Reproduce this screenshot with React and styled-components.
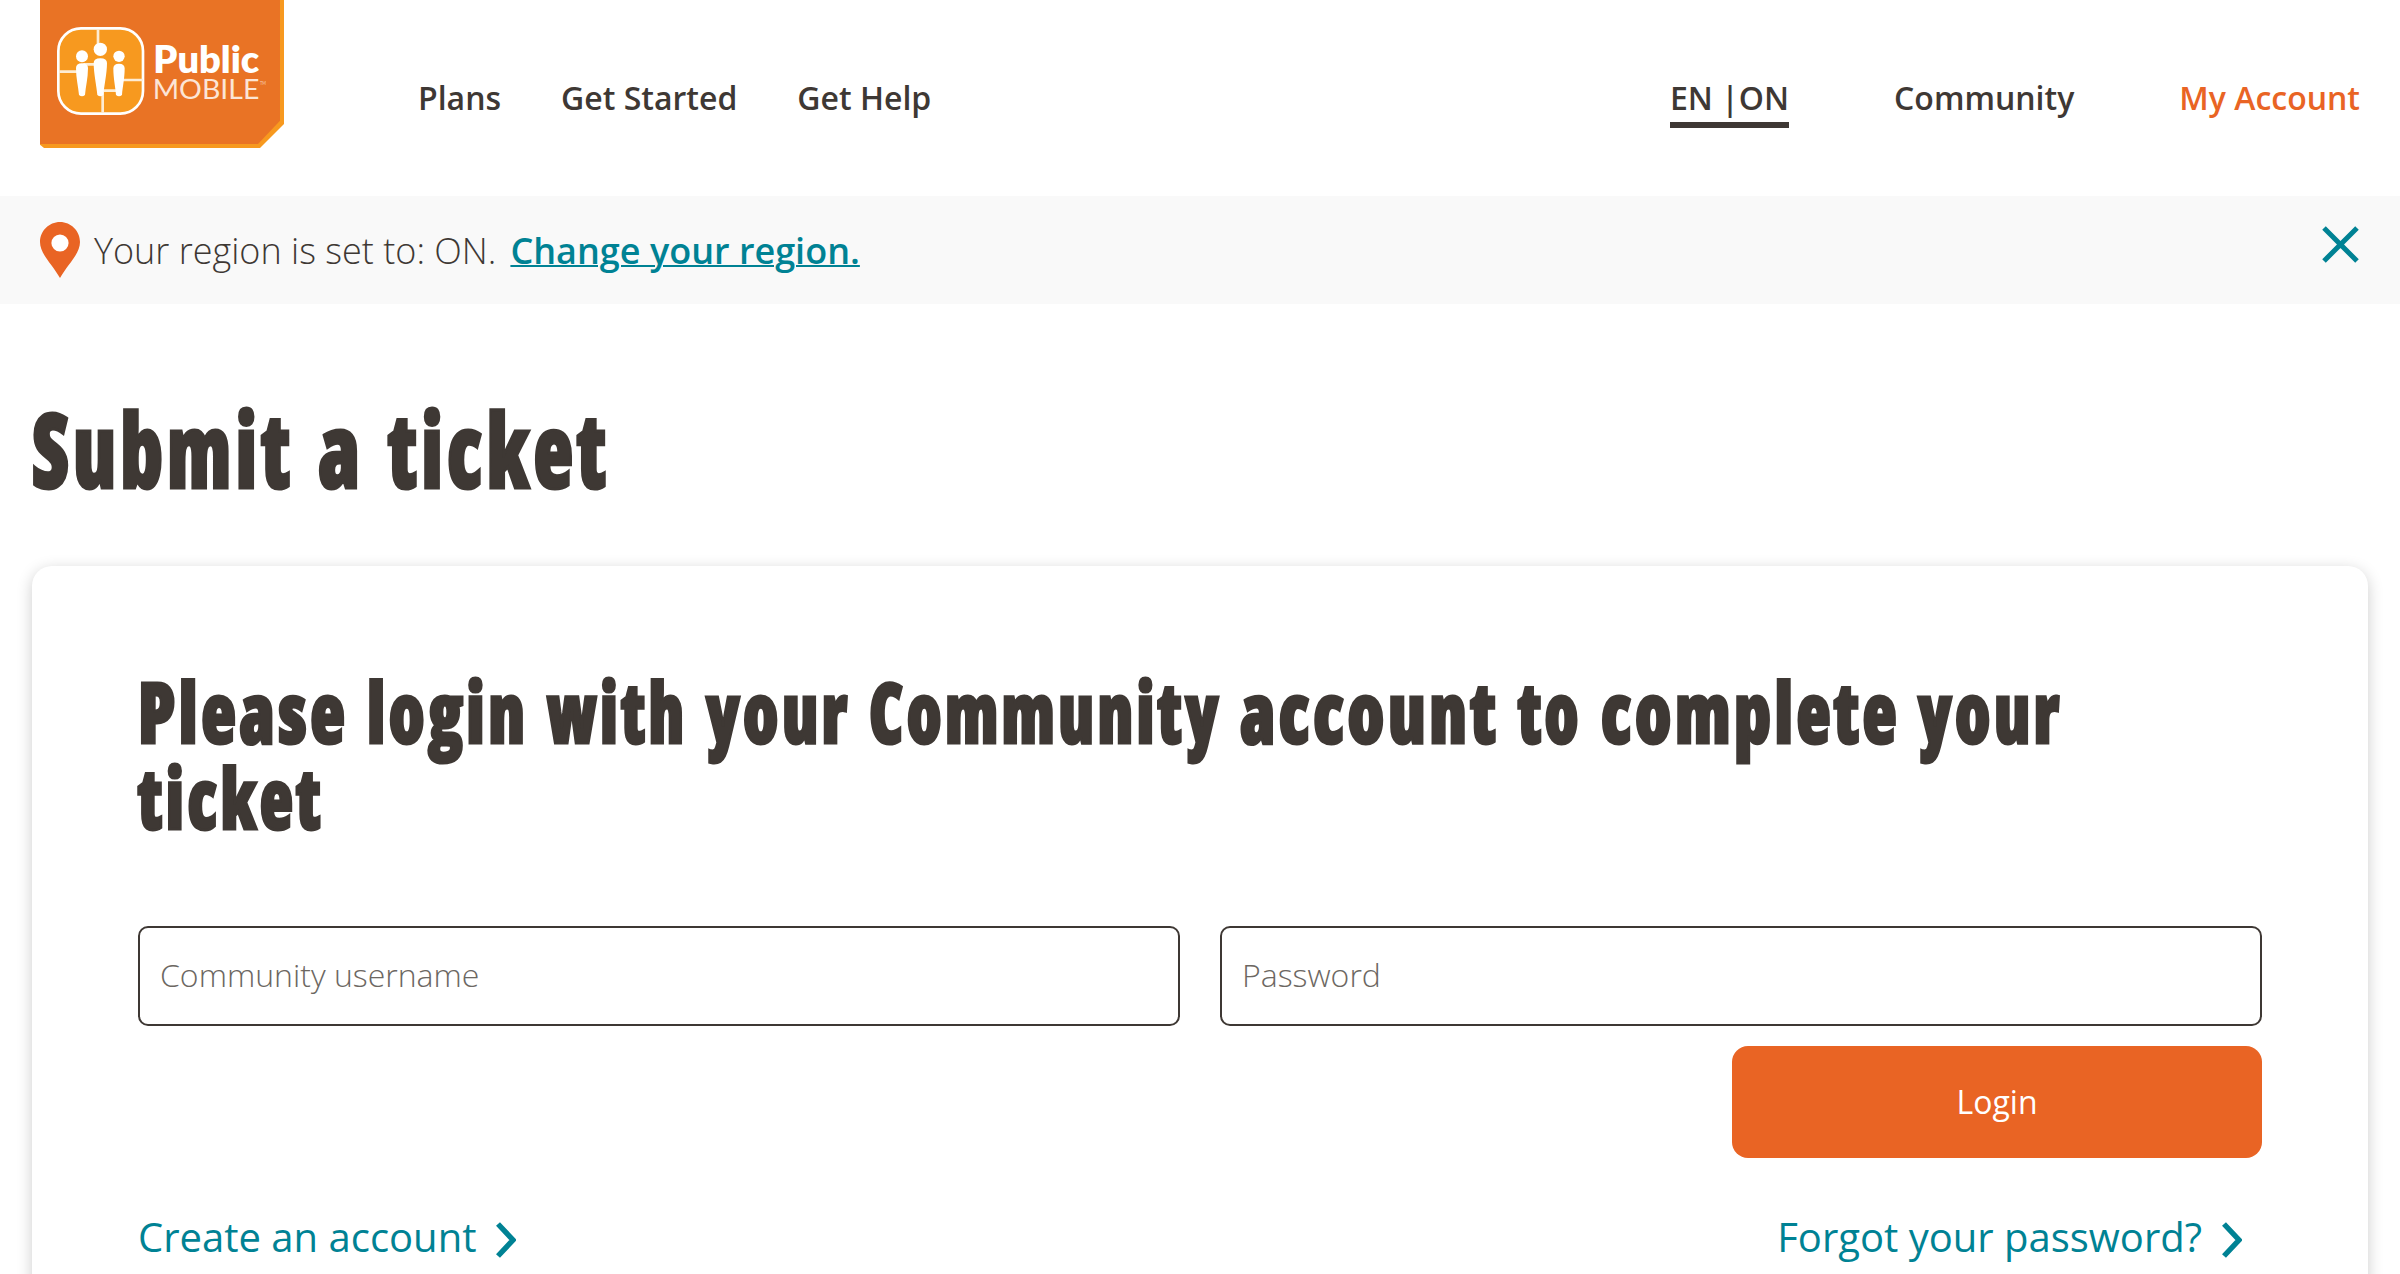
import React, { useLayoutEffect, useRef } from "react";
import styled, { createGlobalStyle } from "styled-components";

const ink = "#3e3834";
const teal = "#008294";
const orange = "#e96424";

const GlobalStyle = createGlobalStyle`
  *, *::before, *::after { box-sizing: border-box; }
  html, body { margin: 0; padding: 0; height: 100%; overflow: hidden; background: #fff; }
  body { font-family: "Open Sans", "Noto Sans", sans-serif; color: ${ink}; }
  h1, h2, p { margin: 0; }
  a { color: inherit; text-decoration: none; }
`;

const Page = styled.div`
  height: 1274px;
  overflow: hidden;
  display: flex;
  flex-direction: column;
`;

const Header = styled.header`
  flex: none;
  height: 196px;
  padding: 0 40px;
  display: flex;
  align-items: flex-start;
`;

const LogoLink = styled.a`
  display: block;
  width: 244px;
  height: 148px;
  svg { display: block; }
`;

const PrimaryNav = styled.nav`
  display: flex;
  gap: 60px;
  margin-left: 134px;
  padding-top: 76px;
`;

const AccountNav = styled.nav`
  display: flex;
  gap: 105px;
  margin-left: auto;
  padding-top: 76px;
`;

const NavLink = styled.a`
  font-size: 32px;
  font-weight: 600;
  line-height: 44px;
  white-space: nowrap;
  color: ${(p) => (p.$accent ? orange : ink)};
  height: 52px;
  border-bottom: ${(p) => (p.$active ? `6px solid ${ink}` : "0")};
`;

const RegionBar = styled.section`
  flex: none;
  height: 108px;
  padding: 26px 41px 0 40px;
  display: flex;
  align-items: flex-start;
  background: #f9f9f9;
  svg { display: block; flex: none; }
`;

const RegionText = styled.p`
  margin-left: 14px;
  padding-top: 4px;
  font-size: 36px;
  font-weight: 300;
  line-height: 50px;
  white-space: pre;
`;

const RegionLink = styled.a`
  margin-left: 14px;
  padding-top: 4px;
  font-size: 36px;
  font-weight: 600;
  line-height: 50px;
  color: ${teal};
  text-decoration: underline;
  text-decoration-thickness: 2px;
`;

const CloseButton = styled.button`
  margin: 4px 0 0 auto;
  padding: 0;
  border: 0;
  background: none;
`;

const Main = styled.main`
  flex: 1;
  padding: 0 32px;
`;

const Heading = styled.h1`
  display: flex;
  flex-wrap: wrap;
  column-gap: ${(p) => p.$gap}px;
  font-family: "Open Sans", sans-serif;
  font-weight: 800;
  font-stretch: 75%;
  font-size: ${(p) => p.$size}px;
  line-height: ${(p) => p.$line}px;
  letter-spacing: 0.05em;
  -webkit-text-stroke: 3px ${ink};
`;

const WordBox = styled.span`
  display: block;
  width: ${(p) => p.$width}px;
  white-space: nowrap;
`;

const WordText = styled.span`
  display: inline-block;
  margin-right: -0.05em;
  transform-origin: left;
`;

const TitleRow = styled.div`
  height: 262px;
  padding-top: 80px;
`;

const Card = styled.section`
  height: 900px;
  padding: 102px 106px 0;
  border-radius: 20px;
  background: #fff;
  box-shadow: 0 4px 16px rgba(0, 0, 0, 0.2);
`;

const Form = styled.form`
  display: grid;
  grid-template-columns: 1fr 1fr;
  gap: 20px 40px;
  margin-top: 86px;
`;

const Field = styled.input`
  width: 100%;
  height: 100px;
  padding: 0 20px 3px;
  border: 2px solid ${ink};
  border-radius: 10px;
  background: #fff;
  font: 300 32px "Open Sans", sans-serif;
  color: ${ink};
  outline: none;
  &::placeholder { color: #6c6762; opacity: 1; }
`;

const LoginButton = styled.button`
  grid-column: 2;
  justify-self: end;
  width: 530px;
  height: 112px;
  padding: 0 0 2px;
  border: 0;
  border-radius: 16px;
  background: ${orange};
  color: #fff;
  font: 400 32px "Open Sans", sans-serif;
`;

const LinkRow = styled.div`
  display: flex;
  justify-content: space-between;
  margin-top: 51px;
  padding-right: 20px;
`;

const TextLink = styled.a`
  display: flex;
  align-items: center;
  gap: 20px;
  font-size: 40px;
  line-height: 56px;
  color: ${teal};
  svg { display: block; margin-top: 5px; }
`;

// Condenses a heading word so that it fills exactly its column width.
function Word({ width, children }) {
  const ref = useRef(null);
  useLayoutEffect(() => {
    const el = ref.current;
    const spacing = parseFloat(getComputedStyle(el).letterSpacing) || 0;
    el.style.transform = `scaleX(${width / (el.offsetWidth - spacing)})`;
  }, [width]);
  return (
    <WordBox $width={width}>
      <WordText ref={ref}>{children}</WordText>
    </WordBox>
  );
}

const Words = ({ items }) => items.map(([text, width], i) => (
  <React.Fragment key={i}>
    <Word width={width}>{text}</Word>{" "}
  </React.Fragment>
));

const titleWords = [["Submit", 258], ["a", 42], ["ticket", 218]];

const loginWords = [
  ["Please", 207], ["login", 158], ["with", 137], ["your", 141], ["Community", 349],
  ["account", 256], ["to", 61], ["complete", 295], ["your", 141], ["ticket", 183],
];

const Person = ({ x, y, r, top, bottom, w }) => (
  <>
    <circle cx={x} cy={y} r={r} fill="#fff" />
    <path
      fill="#fff"
      d={`M${x - w} ${top + 14} Q${x - w} ${top} ${x} ${top} Q${x + w} ${top} ${x + w} ${top + 14} C${x + w} ${top + 45} ${x + 11} ${bottom - 30} ${x + 9} ${bottom - 5} Q${x} ${bottom + 3} ${x - 9} ${bottom - 5} C${x - 11} ${bottom - 30} ${x - w} ${top + 45} ${x - w} ${top + 14}Z`}
    />
  </>
);

const Logo = () => (
  <svg width="244" height="148" viewBox="60 0 732 444">
    <path d="M60 0H792V372L720 444H72L60 434Z" fill="#f7991f" />
    <path d="M60 0H780V362L714 432H60Z" fill="#e97325" />
    <rect x="115" y="85" width="254" height="256" rx="68" fill="#f7991f" stroke="#fff" strokeWidth="8" />
    <g stroke="#fdecd3" strokeWidth="8" fill="none">
      <path d="M234 88V140M118 215H180M190 193H235M300 240H368M248 338V272H290" />
    </g>
    <Person x={186} y={169} r={18} top={190} bottom={290} w={18} />
    <Person x={241} y={148} r={20} top={175} bottom={290} w={20} />
    <Person x={297} y={169} r={17} top={191} bottom={290} w={17} />
    <text x="400" y="220" fill="#fff" fontFamily="Lato, sans-serif" fontWeight="800" fontSize="116" textLength="318" lengthAdjust="spacingAndGlyphs">Public</text>
    <text x="398" y="297" fill="#fce5d6" fontFamily="Lato, sans-serif" fontWeight="400" fontSize="79" textLength="320" lengthAdjust="spacingAndGlyphs">MOBILE</text>
    <text x="720" y="254" fill="#f8cdb0" fontFamily="Lato, sans-serif" fontSize="16" textLength="18" lengthAdjust="spacingAndGlyphs">TM</text>
  </svg>
);

const Pin = () => (
  <svg width="40" height="56" viewBox="0 0 40 56">
    <path fill={orange} d="M20 0C31 0 40 9 40 20C40 32 28 42 20 56C12 42 0 32 0 20C0 9 9 0 20 0Z" />
    <circle cx="20" cy="21" r="8.6" fill="#fff" />
  </svg>
);

const Cross = () => (
  <svg width="37" height="37" viewBox="0 0 37 37">
    <path d="M2 2L35 35M35 2L2 35" stroke={teal} strokeWidth="5" />
  </svg>
);

const Chevron = () => (
  <svg width="20" height="36" viewBox="0 0 20 36">
    <path d="M2 2L17 18L2 34" fill="none" stroke={teal} strokeWidth="5.4" />
  </svg>
);

export default function App() {
  return (
    <Page>
      <GlobalStyle />
      <Header>
        <LogoLink href="#"><Logo /></LogoLink>
        <PrimaryNav>
          <NavLink href="#">Plans</NavLink>
          <NavLink href="#">Get Started</NavLink>
          <NavLink href="#">Get Help</NavLink>
        </PrimaryNav>
        <AccountNav>
          <NavLink href="#" $active>EN |ON</NavLink>
          <NavLink href="#">Community</NavLink>
          <NavLink href="#" $accent>My Account</NavLink>
        </AccountNav>
      </Header>
      <RegionBar>
        <Pin />
        <RegionText>Your region is set to: ON.</RegionText>
        <RegionLink href="#">Change your region.</RegionLink>
        <CloseButton type="button"><Cross /></CloseButton>
      </RegionBar>
      <Main>
        <TitleRow>
          <Heading $size={103} $line={128} $gap={28}>
            <Words items={titleWords} />
          </Heading>
        </TitleRow>
        <Card>
          <Heading as="h2" $size={84} $line={86} $gap={22}>
            <Words items={loginWords} />
          </Heading>
          <Form>
            <Field placeholder="Community username" />
            <Field type="password" placeholder="Password" />
            <LoginButton type="button">Login</LoginButton>
          </Form>
          <LinkRow>
            <TextLink href="#">Create an account<Chevron /></TextLink>
            <TextLink href="#">Forgot your password?<Chevron /></TextLink>
          </LinkRow>
        </Card>
      </Main>
    </Page>
  );
}
